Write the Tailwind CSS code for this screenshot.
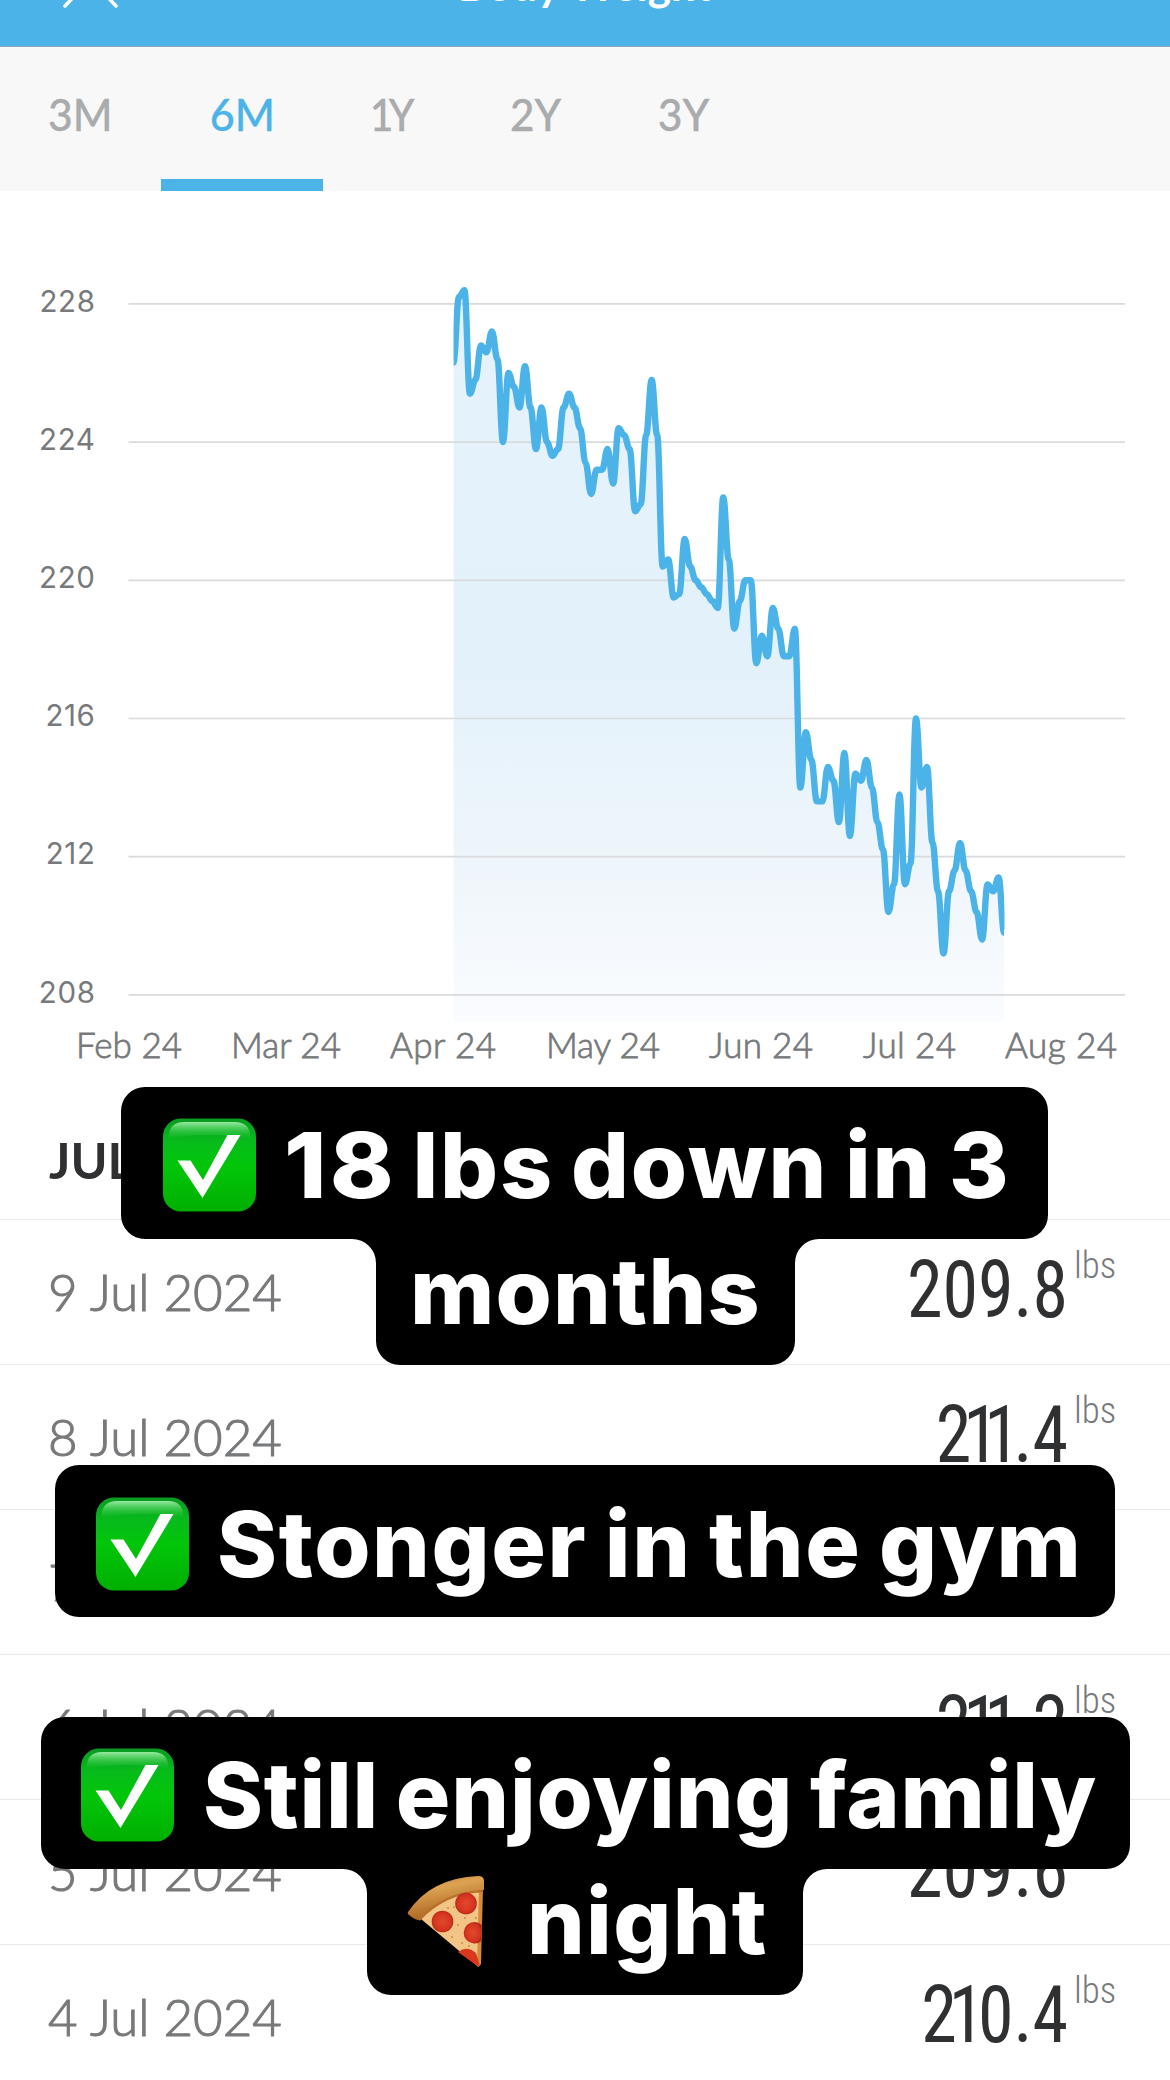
<!DOCTYPE html>
<html lang="en">
<head>
<meta charset="utf-8">
<title>Body Weight</title>
<script src="https://cdn.jsdelivr.net/npm/@tailwindcss/browser@4"></script>
</head>
<body class="bg-white">
<svg class="absolute" width="0" height="0">
  <defs>
    <linearGradient id="tile" x1="0" y1="0" x2="0" y2="1">
      <stop offset="0" stop-color="#0a9a22"/><stop offset=".25" stop-color="#07bb1b"/><stop offset=".5" stop-color="#02c60a"/><stop offset="1" stop-color="#00af00"/>
    </linearGradient>
    <linearGradient id="gloss" x1="0" y1="0" x2="0" y2="1">
      <stop offset="0" stop-color="#a0eea8" stop-opacity=".95"/><stop offset="1" stop-color="#20cc30" stop-opacity="0"/>
    </linearGradient>
    <linearGradient id="crust" x1="0" y1="0" x2=".35" y2="1">
      <stop offset="0" stop-color="#b8772a"/><stop offset=".35" stop-color="#dda352"/><stop offset="1" stop-color="#a8601c"/>
    </linearGradient>
    <radialGradient id="pepperoni">
      <stop offset="0" stop-color="#e04a2c"/><stop offset=".8" stop-color="#d63320"/><stop offset="1" stop-color="#b52a18"/>
    </radialGradient>
    <symbol id="check" viewBox="0 0 94 94">
      <rect x=".5" y=".5" width="93" height="93" rx="18" fill="url(#tile)"/>
      <path d="M6 22V20Q6 4 22 4H72Q88 4 88 20V22Q80 17 47 17T6 22Z" fill="url(#gloss)"/>
      <path d="M15 42.500H28L40.500 62L65 17H78L40 80Z" fill="#fff"/>
    </symbol>
    <symbol id="pizza" viewBox="0 0 78 92">
      <path d="M8 38Q34 12 75 12L73 88Q73 92 69 89Z" fill="#f2c586"/>
      <path d="M72 12H76L74 88Q72 92 70 90Z" fill="#d58a3a"/>
      <path d="M1 36Q24 2 71 0Q77 0 77 5V14Q38 14 12 44Q8 44 2 39Q0 38 1 36Z" fill="url(#crust)"/>
      <path d="M12 44Q38 16 76 15" fill="none" stroke="#b9702a" stroke-width="2.500"/>
      <circle cx="59" cy="27.500" r="10.800" fill="url(#pepperoni)"/>
      <circle cx="35.500" cy="45.500" r="10.800" fill="url(#pepperoni)"/>
      <path d="M75 49A10.800 10.800 0 1 0 74.500 65Z" fill="url(#pepperoni)"/>
      <path d="M51 76Q60 69 69 77L73 90L69 89Z" fill="#d9381f"/>
      <path d="M46 31h2M44 61h2M57 42h2M50 49h2M61 70h2M40 32h2M54 67h2M68 42h2" stroke="#c98a45" stroke-width="1.500"/>
    </symbol>
  </defs>
</svg>

<main class="relative w-[1170px] h-[2080px] overflow-hidden bg-white font-['Lato','Open_Sans',sans-serif] text-[#77797b]">
  <header class="relative flex h-[47px] items-start justify-center border-b border-[#8fa6b5] bg-[#4cb3e8]">
    <svg class="absolute left-[60px] top-0" width="60" height="12" viewBox="0 0 60 12"><path d="M5 6L19 -9M56 6L42 -9" stroke="#fff" stroke-width="3.500" stroke-linecap="round"/></svg>
    <h1 class="-mt-[38px] text-[44px] leading-none font-bold text-white">Body Weight</h1>
  </header>

  <nav class="flex h-[144px] bg-[#f8f8f8] text-[44px] leading-none font-medium text-[#a9abad] [&>span]:flex [&>span]:justify-center [&>span]:pt-[45px] [&>span]:shrink-0">
    <span class="w-[161px]"><b class="inline-block scale-x-[0.97] font-medium [-webkit-text-stroke:0.3px_#a9abad]">3M</b></span>
    <span class="w-[162px] border-b-[12px] border-[#4cb3e8] text-[#4cb3e8]"><b class="inline-block scale-x-[0.98] font-medium [-webkit-text-stroke:0.3px_#4cb3e8]">6M</b></span>
    <span class="w-[138px]"><b class="inline-block scale-x-[0.93] font-medium [-webkit-text-stroke:0.3px_#a9abad]"><i class="-mr-[5px] not-italic">1</i>Y</b></span>
    <span class="w-[150px]"><b class="inline-block scale-x-[0.96] font-medium [-webkit-text-stroke:0.3px_#a9abad]">2Y</b></span>
    <span class="w-[146px]"><b class="inline-block scale-x-[0.97] font-medium [-webkit-text-stroke:0.3px_#a9abad]">3Y</b></span>
  </nav>

  <section class="h-[896px]">
    <svg width="1170" height="896" viewBox="0 191 1170 896">
      <defs>
        <linearGradient id="area" gradientUnits="userSpaceOnUse" x1="0" y1="290" x2="0" y2="1021">
          <stop offset="0" stop-color="#e6f3fb"/><stop offset=".5" stop-color="#e3f1fb"/><stop offset=".8" stop-color="#eff6fb"/><stop offset="1" stop-color="#fafcff"/>
        </linearGradient>
        <clipPath id="plot"><rect x="453.500" y="191" width="551" height="831"/></clipPath>
      </defs>
      <path id="fill" fill="url(#area)" clip-path="url(#plot)"/>
      <g id="grid" stroke="#d8dadb" stroke-width="1.700"></g>
      <g id="ylabels" class="font-['Inter',sans-serif] text-[29.5px] tracking-[0.6px]" fill="#77797b" text-anchor="end"></g>
      <path id="line" fill="none" stroke="#4cb3e8" stroke-width="6.400" stroke-linejoin="round" clip-path="url(#plot)"/>
      <g class="text-[35px] font-light" fill="#77797b" stroke="#77797b" stroke-width=".8">
        <text x="76" y="1058" textLength="106">Feb 24</text>
        <text x="231" y="1058" textLength="110">Mar 24</text>
        <text x="390" y="1058" textLength="106">Apr 24</text>
        <text x="546" y="1058" textLength="114">May 24</text>
        <text x="709" y="1058" textLength="104">Jun 24</text>
        <text x="863" y="1058" textLength="93">Jul 24</text>
        <text x="1005" y="1058" textLength="112">Aug 24</text>
      </g>
    </svg>
  </section>

  <section>
    <h2 class="flex h-[133px] items-start border-b border-[#e9e9eb] pl-[49px] pt-[48px] text-[50px] leading-none font-bold text-[#2f3032]">JULY</h2>
    <ul id="rows"></ul>
  </section>

  <div class="absolute left-[121px] top-[1087px] h-[278px] w-[927px] pt-[15px]">
    <svg class="absolute left-0 top-0" width="927" height="278"><path d="M24 0H903A24 24 0 0 1 927 24V128A24 24 0 0 1 903 152H698A24 24 0 0 0 674 176V254A24 24 0 0 1 650 278H279A24 24 0 0 1 255 254V176A24 24 0 0 0 231 152H24A24 24 0 0 1 0 128V24A24 24 0 0 1 24 0Z"/></svg>
    <div class="relative flex h-[126px] items-center pl-[41px] font-['Inter',sans-serif] text-[91px] leading-[126px] font-extrabold tracking-[1.900px] [word-spacing:-5px] whitespace-nowrap text-white"><svg width="95" height="94"><use href="#check"/></svg><span class="ml-[27px]"><b class="inline-block origin-left scale-x-[1.06] pr-[5px] font-extrabold tracking-[3px]">18</b> lbs down in 3</span></div>
    <div class="relative flex h-[126px] items-center pl-[289px] font-['Inter',sans-serif] text-[91px] leading-[126px] font-extrabold tracking-[1.2px] whitespace-nowrap text-white">months</div>
  </div>

  <div class="absolute left-[55px] top-[1465px] h-[152px] w-[1060px] rounded-[24px] bg-black pt-[16px]">
    <div class="flex h-[126px] items-center pl-[40px] font-['Inter',sans-serif] text-[91px] leading-[126px] font-extrabold tracking-[1.600px] [word-spacing:-4px] whitespace-nowrap text-white"><svg width="95" height="94"><use href="#check"/></svg><span class="ml-[27px]">Stonger in the gym</span></div>
  </div>

  <div class="absolute left-[41px] top-[1717px] h-[277px] w-[1089px] pt-[15px]">
    <svg class="absolute left-0 top-0" width="1089" height="278"><path d="M24 0H1065A24 24 0 0 1 1089 24V128A24 24 0 0 1 1065 152H786A24 24 0 0 0 762 176V254A24 24 0 0 1 738 278H350A24 24 0 0 1 326 254V176A24 24 0 0 0 302 152H24A24 24 0 0 1 0 128V24A24 24 0 0 1 24 0Z"/></svg>
    <div class="relative flex h-[126px] items-center pl-[39px] font-['Inter',sans-serif] text-[91px] leading-[126px] font-extrabold tracking-[0.800px] [word-spacing:-4px] whitespace-nowrap text-white"><svg width="95" height="94"><use href="#check"/></svg><span class="ml-[28px]">Still enjoying family</span></div>
    <div class="relative flex h-[126px] items-center pl-[366px] font-['Inter',sans-serif] text-[91px] leading-[126px] font-extrabold tracking-[1.3px] whitespace-nowrap text-white"><svg class="mt-[2px]" width="78" height="92"><use href="#pizza"/></svg><span class="ml-[42px]">night</span></div>
  </div>
</main>

<script>
const weights = [226.3,228.2,228.4,225.4,225.8,226.8,226.6,227.2,226.4,224,226,225.6,225,226.2,225,223.8,225,224,223.6,223.8,225,225.4,225,224.4,223.4,222.5,223.2,223.2,223.8,222.8,224.4,224.2,223.8,222,222.2,224.2,225.8,224.2,220.4,220.6,219.5,219.6,221.2,220.4,220,219.8,219.6,219.4,219.2,222.4,220.6,218.6,219.4,220,220,217.6,218.4,217.8,219.2,218.6,217.8,217.8,218.6,214,215.6,214.8,213.6,213.6,214.6,214.2,213,215,212.6,214.4,214.2,214.8,214,213,212.2,210.4,211.2,213.8,211.2,211.8,216,214,214.6,212.4,211,209.2,211,211.6,212.4,211.6,211,210.4,209.6,211.2,211,211.4,209.8];
const STEP = 5.507, x = i => 453.4 + STEP * i, y = w => 303.9 + (228 - w) * 34.55;
let d = `M${x(0)} ${y(weights[0])}`;
for (let i = 1; i < weights.length; i++) {
  const k = STEP * 0.4;
  d += `C${x(i - 1) + k} ${y(weights[i - 1])} ${x(i) - k} ${y(weights[i])} ${x(i)} ${y(weights[i])}`;
}
document.getElementById('line').setAttribute('d', d);
document.getElementById('fill').setAttribute('d', d + 'V1022H453Z');
let grid = '', labels = '';
for (let w = 228; w >= 208; w -= 4) {
  grid += `<path d="M128.500 ${y(w)}H1125"/>`;
  labels += `<text x="95.500" y="${y(w) + 7.6}">${w}</text>`;
}
document.getElementById('grid').innerHTML = grid;
document.getElementById('ylabels').innerHTML = labels;

const entries = [['9', '209.8'], ['8', '211.4'], ['7', '211.0'], ['6', '211.2'], ['5', '209.6'], ['4', '210.4']];
document.getElementById('rows').innerHTML = entries.map(([day, w]) => `
  <li class="flex h-[145px] items-start border-b border-[#e9e9eb] pl-[48px] pr-[57px]">
    <span class="mt-[46px] inline-block origin-left text-[51px] leading-none font-light [-webkit-text-stroke:1.1px_#77797b]">${day} Jul 2024</span>
    <span class="mt-[30px] ml-auto inline-block origin-right scale-x-[0.9] font-['Roboto_Condensed',Roboto,sans-serif] text-[80px] leading-none text-[#2f3032]">${w.replace(/1/g, '<i class="-ml-[9px] -mr-[7px] not-italic">1</i>')}</span>
    <span class="mt-[27px] ml-[6px] w-[39px] font-['Roboto_Condensed',Roboto,sans-serif] text-[37px] leading-none font-light">lbs</span>
  </li>`).join('');
</script>
</body>
</html>
